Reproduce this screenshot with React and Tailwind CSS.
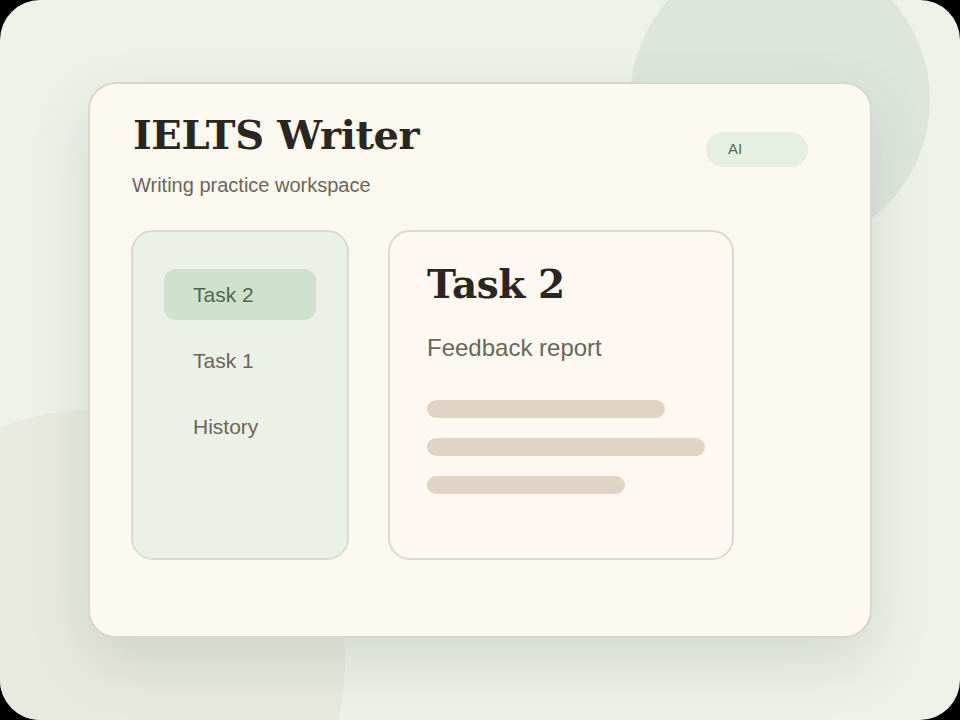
import React from 'react';

const navItems = [
  { name: 'Task 2', active: true },
  { name: 'Task 1' },
  { name: 'History' },
];

const bars = ['w-[238px]', 'w-[278px]', 'w-[198px]'];

export default function App() {
  return (
    <div className="w-[960px] h-[720px] bg-black">
      <div className="relative w-full h-full overflow-hidden rounded-[40px] bg-[#edf2e9] font-['Liberation_Sans',Arial,sans-serif]">
        {/* background blobs */}
        <div className="absolute left-[630px] top-[-50px] w-[300px] h-[300px] rounded-full bg-[#dde6dd]" />
        <div className="absolute left-[-160px] top-[410px] w-[505px] h-[505px] rounded-full bg-[#e8eadf]" />

        <div className="relative pt-[82px] pl-[88px]">
          <div className="w-[784px] h-[556px] rounded-[28px] border-2 border-[#ddd5c7] bg-[#fbf8ef] shadow-[0_24px_60px_rgba(60,70,50,0.14)] pl-[41px] pt-[27px]">
            <div className="flex items-start">
              <div className="flex-1">
                <h1 className="pl-[2px] font-['DejaVu_Serif',Georgia,serif] font-bold text-[40px] leading-[48px] tracking-[-0.4px] text-[#2c2620]">
                  IELTS Writer
                </h1>
                <p className="mt-[14px] pl-[1px] text-[20px] leading-[24px] text-[#6b6659]">Writing practice workspace</p>
              </div>
              <div className="mt-[21px] mr-[62px] w-[102px] h-[35px] rounded-full bg-[#e6eee2] pl-[22px] flex items-center text-[15px] text-[#4f6b4f]">
                AI
              </div>
            </div>

            <div className="mt-[33px] flex gap-[39px]">
              <div className="w-[218px] h-[330px] rounded-[22px] border-2 border-[#dadccd] bg-[#ebf1e7] pt-[37px] pl-[31px]">
                <div className="flex flex-col gap-[15px]">
                  {navItems.map((item) => (
                    <div
                      key={item.name}
                      className={`w-[152px] h-[51px] rounded-[12px] pl-[29px] flex items-center text-[21px] ${item.active ? 'bg-[#cfe0cc] text-[#4d6a4d]' : 'text-[#6b6659]'}`}
                    >
                      {item.name}
                    </div>
                  ))}
                </div>
              </div>

              <div className="w-[346px] h-[330px] rounded-[22px] border-2 border-[#e0d7c9] bg-[#fdf8f1] pt-[28px] pl-[37px]">
                <h2 className="font-['DejaVu_Serif',Georgia,serif] font-bold text-[39px] leading-[48px] tracking-[-0.4px] text-[#2c2620]">
                  Task 2
                </h2>
                <p className="mt-[26px] text-[24px] leading-[28px] text-[#6b6659]">Feedback report</p>
                <div className="mt-[38px] flex flex-col gap-[20px]">
                  {bars.map((w, i) => (
                    <div key={i} className={`${w} h-[18px] rounded-full bg-[#e0d4c4]`} />
                  ))}
                </div>
              </div>
            </div>
          </div>
        </div>
      </div>
    </div>
  );
}
